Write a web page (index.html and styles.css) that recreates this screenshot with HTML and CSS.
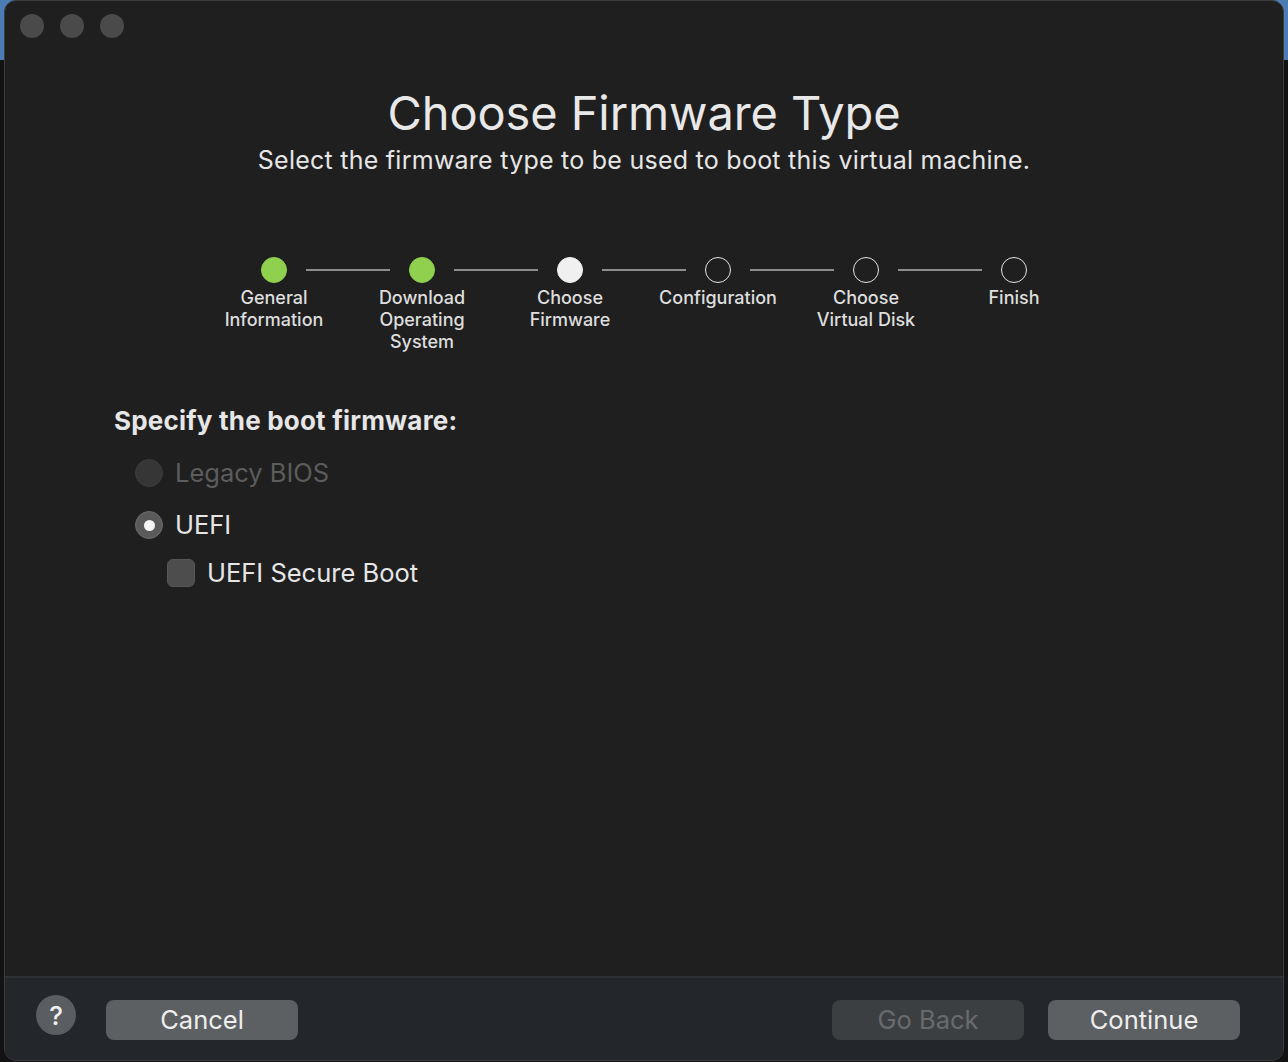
FILE: index.html
```html
<!DOCTYPE html>
<html>
<head>
<meta charset="utf-8">
<link rel="stylesheet" href="styles.css">
</head>
<body>
<div class="desktop">
  <div class="window">
    <div class="main">
      <div class="titlebar">
        <span class="light"></span><span class="light"></span><span class="light"></span>
      </div>
      <h1 class="title">Choose Firmware Type</h1>
      <p class="subtitle">Select the firmware type to be used to boot this virtual machine.</p>

      <div class="stepper">
        <div class="track">
          <span class="dot done"></span><span class="line"></span>
          <span class="dot done"></span><span class="line"></span>
          <span class="dot current"></span><span class="line"></span>
          <span class="dot"></span><span class="line"></span>
          <span class="dot"></span><span class="line"></span>
          <span class="dot"></span>
        </div>
        <div class="labels">
          <span class="label">General<br>Information</span>
          <span class="label">Download<br>Operating<br>System</span>
          <span class="label">Choose<br>Firmware</span>
          <span class="label">Configuration</span>
          <span class="label">Choose<br>Virtual Disk</span>
          <span class="label">Finish</span>
        </div>
      </div>

      <div class="form">
        <div class="form-title">Specify the boot firmware:</div>
        <div class="option disabled"><span class="radio"></span><span class="opt-text">Legacy BIOS</span></div>
        <div class="option"><span class="radio checked"></span><span class="opt-text">UEFI</span></div>
        <div class="option sub"><span class="checkbox"></span><span class="opt-text">UEFI Secure Boot</span></div>
      </div>
    </div>
    <div class="footer">
      <span class="help">?</span>
      <button class="btn">Cancel</button>
      <span class="spacer"></span>
      <button class="btn disabled">Go Back</button>
      <button class="btn">Continue</button>
    </div>
  </div>
</div>
</body>
</html>
```
FILE: styles.css
```css
html, body {
  margin: 0;
  padding: 0;
}
body {
  width: 1288px;
  height: 1062px;
  overflow: hidden;
  background: linear-gradient(to bottom, #4b7db4 0, #4b7db4 60px, #131313 60px, #131313 100%);
  font-family: Inter, "Noto Sans", "Liberation Sans", sans-serif;
}
.desktop {
  padding-left: 4px;
}
.window {
  width: 1280px;
  height: 1061px;
  box-sizing: border-box;
  background: #1f1f1f;
  border: 1px solid #3c3c3c;
  border-radius: 12px;
  display: flex;
  flex-direction: column;
  overflow: hidden;
}
.main {
  flex: 1;
  display: flex;
  flex-direction: column;
  align-items: center;
}
.titlebar {
  align-self: stretch;
  display: flex;
  gap: 16px;
  padding: 13px 0 0 15px;
  height: 24px;
}
.light {
  width: 24px;
  height: 24px;
  border-radius: 50%;
  background: #4a4a4a;
}
.title {
  margin: 47px 0 0;
  font-size: 47px;
  font-weight: 400;
  line-height: 56px;
  color: #e8e8e8;
  letter-spacing: -0.1px;
}
.subtitle {
  margin: 3px 0 0;
  font-size: 25px;
  line-height: 32px;
  color: #e6e6e6;
  letter-spacing: 0.25px;
}
.stepper {
  margin-top: 81px;
  display: flex;
  flex-direction: column;
  align-items: center;
  width: 888px;
}
.track {
  display: flex;
  align-items: center;
  gap: 19px;
  height: 26px;
}
.dot {
  width: 26px;
  height: 26px;
  box-sizing: border-box;
  border-radius: 50%;
  border: 1.5px solid #e4e4e4;
}
.dot.done {
  background: #8fd14f;
  border-color: #8fd14f;
}
.dot.current {
  background: #f0f0f0;
  border-color: #f0f0f0;
}
.line {
  width: 84px;
  height: 2px;
  background: #8c8c8c;
}
.labels {
  display: grid;
  grid-template-columns: repeat(6, 148px);
  margin-top: 4px;
}
.label {
  text-align: center;
  font-size: 18px;
  font-weight: 500;
  line-height: 22px;
  color: #dedede;
}
.form {
  align-self: stretch;
  padding: 52px 0 0 109px;
  display: flex;
  flex-direction: column;
}
.form-title {
  font-size: 26px;
  font-weight: 700;
  color: #e6e6e6;
  line-height: 32px;
  letter-spacing: 0.2px;
}
.option {
  display: flex;
  align-items: center;
  gap: 12px;
  margin-left: 21px;
  height: 52px;
}
.option:nth-child(2) {
  margin-top: 10px;
}
.option.sub {
  margin-left: 53px;
  height: 44px;
}
.radio {
  width: 28px;
  height: 28px;
  box-sizing: border-box;
  border-radius: 50%;
  background: #5a5a5a;
  border: 1px solid #6a6a6a;
  display: flex;
  align-items: center;
  justify-content: center;
}
.radio.checked::after {
  content: "";
  width: 11px;
  height: 11px;
  border-radius: 50%;
  background: #f5f5f5;
}
.option.disabled .radio {
  background: #363636;
  border-color: #3c3c3c;
}
.checkbox {
  width: 28px;
  height: 28px;
  box-sizing: border-box;
  border-radius: 6px;
  background: #4d4d4d;
  border: 1px solid #575757;
}
.opt-text {
  font-size: 25.5px;
  color: #e6e6e6;
  line-height: 30px;
}
.option.disabled .opt-text {
  color: #5c5c5c;
}
.footer {
  height: 84px;
  box-sizing: border-box;
  border-top: 2px solid #2e3134;
  background: #23262a;
  display: flex;
  align-items: center;
  padding: 0 43px 6px 31px;
  gap: 24px;
}
.help {
  width: 40px;
  height: 40px;
  border-radius: 50%;
  background: #5b5e61;
  color: #f0f0f0;
  font-size: 26px;
  font-weight: 500;
  display: flex;
  align-items: center;
  justify-content: center;
  margin-right: 6px;
  margin-top: -2px;
}
.spacer {
  flex: 1;
}
.btn {
  width: 192px;
  height: 40px;
  border: none;
  border-radius: 8px;
  background: #5d6062;
  color: #eeeeee;
  font-family: Inter, "Noto Sans", "Liberation Sans", sans-serif;
  font-size: 25.5px;
  padding: 0;
  line-height: 40px;
  margin-top: 8px;
}
.btn.disabled {
  background: #3c3f42;
  color: #686b6e;
}
```
